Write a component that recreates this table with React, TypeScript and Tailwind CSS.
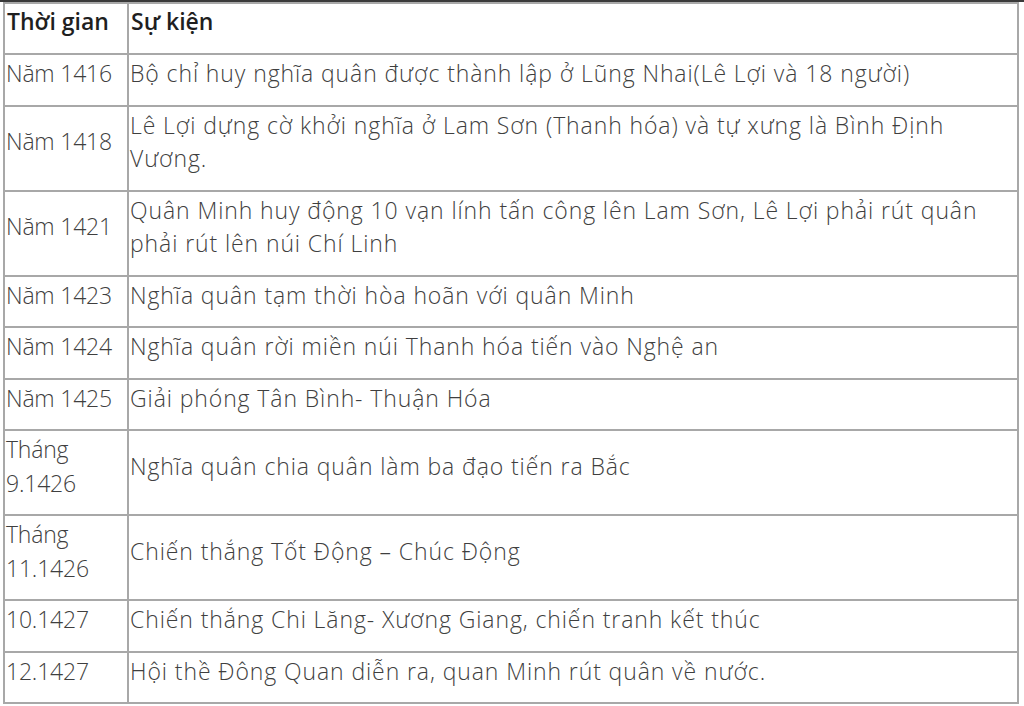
const rows: [string, string][] = [
  ["Năm 1416", "Bộ chỉ huy nghĩa quân được thành lập ở Lũng Nhai(Lê Lợi và 18 người)"],
  ["Năm 1418", "Lê Lợi dựng cờ khởi nghĩa ở Lam Sơn (Thanh hóa) và tự xưng là Bình Định Vương."],
  ["Năm 1421", "Quân Minh huy động 10 vạn lính tấn công lên Lam Sơn, Lê Lợi phải rút quân phải rút lên núi Chí Linh"],
  ["Năm 1423", "Nghĩa quân tạm thời hòa hoãn với quân Minh"],
  ["Năm 1424", "Nghĩa quân rời miền núi Thanh hóa tiến vào Nghệ an"],
  ["Năm 1425", "Giải phóng Tân Bình- Thuận Hóa"],
  ["Tháng 9.1426", "Nghĩa quân chia quân làm ba đạo tiến ra Bắc"],
  ["Tháng 11.1426", "Chiến thắng Tốt Động – Chúc Động"],
  ["10.1427", "Chiến thắng Chi Lăng- Xương Giang, chiến tranh kết thúc"],
  ["12.1427", "Hội thề Đông Quan diễn ra, quan Minh rút quân về nước."],
];

export default function App() {
  return (
    <div className="w-[1024px] h-[706px] bg-white border-t-2 border-[#3a3a3a] pl-[3px] pt-0 font-['Open_Sans','Noto_Sans',sans-serif] text-[23px] leading-[33.5px] font-light text-[#3f3f3f] overflow-hidden">
      <table className="w-[1016px] border-collapse table-fixed">
        <colgroup>
          <col className="w-[124px]" />
          <col />
        </colgroup>
        <thead>
          <tr className="h-[51px]">
            <th className="border-2 border-[#a8a8a8] text-left align-middle font-semibold text-[#1f1f1f] pl-[2px] pt-0 pb-[13px]">
              Thời gian
            </th>
            <th className="border-2 border-[#a8a8a8] text-left align-middle font-semibold text-[#1f1f1f] pl-[2px] pt-0 pb-[13px]">
              Sự kiện
            </th>
          </tr>
        </thead>
        <tbody>
          {rows.map(([time, event]) => (
            <tr key={time}>
              <td className="border-2 border-[#a8a8a8] align-middle pl-[1px] pt-[2px] pb-[14px] tracking-[-0.2px]">
                {time}
              </td>
              <td className="border-2 border-[#a8a8a8] align-middle pl-[1px] pr-1 pt-[2px] pb-[14px] tracking-[0.9px]">
                {event}
              </td>
            </tr>
          ))}
        </tbody>
      </table>
    </div>
  );
}
